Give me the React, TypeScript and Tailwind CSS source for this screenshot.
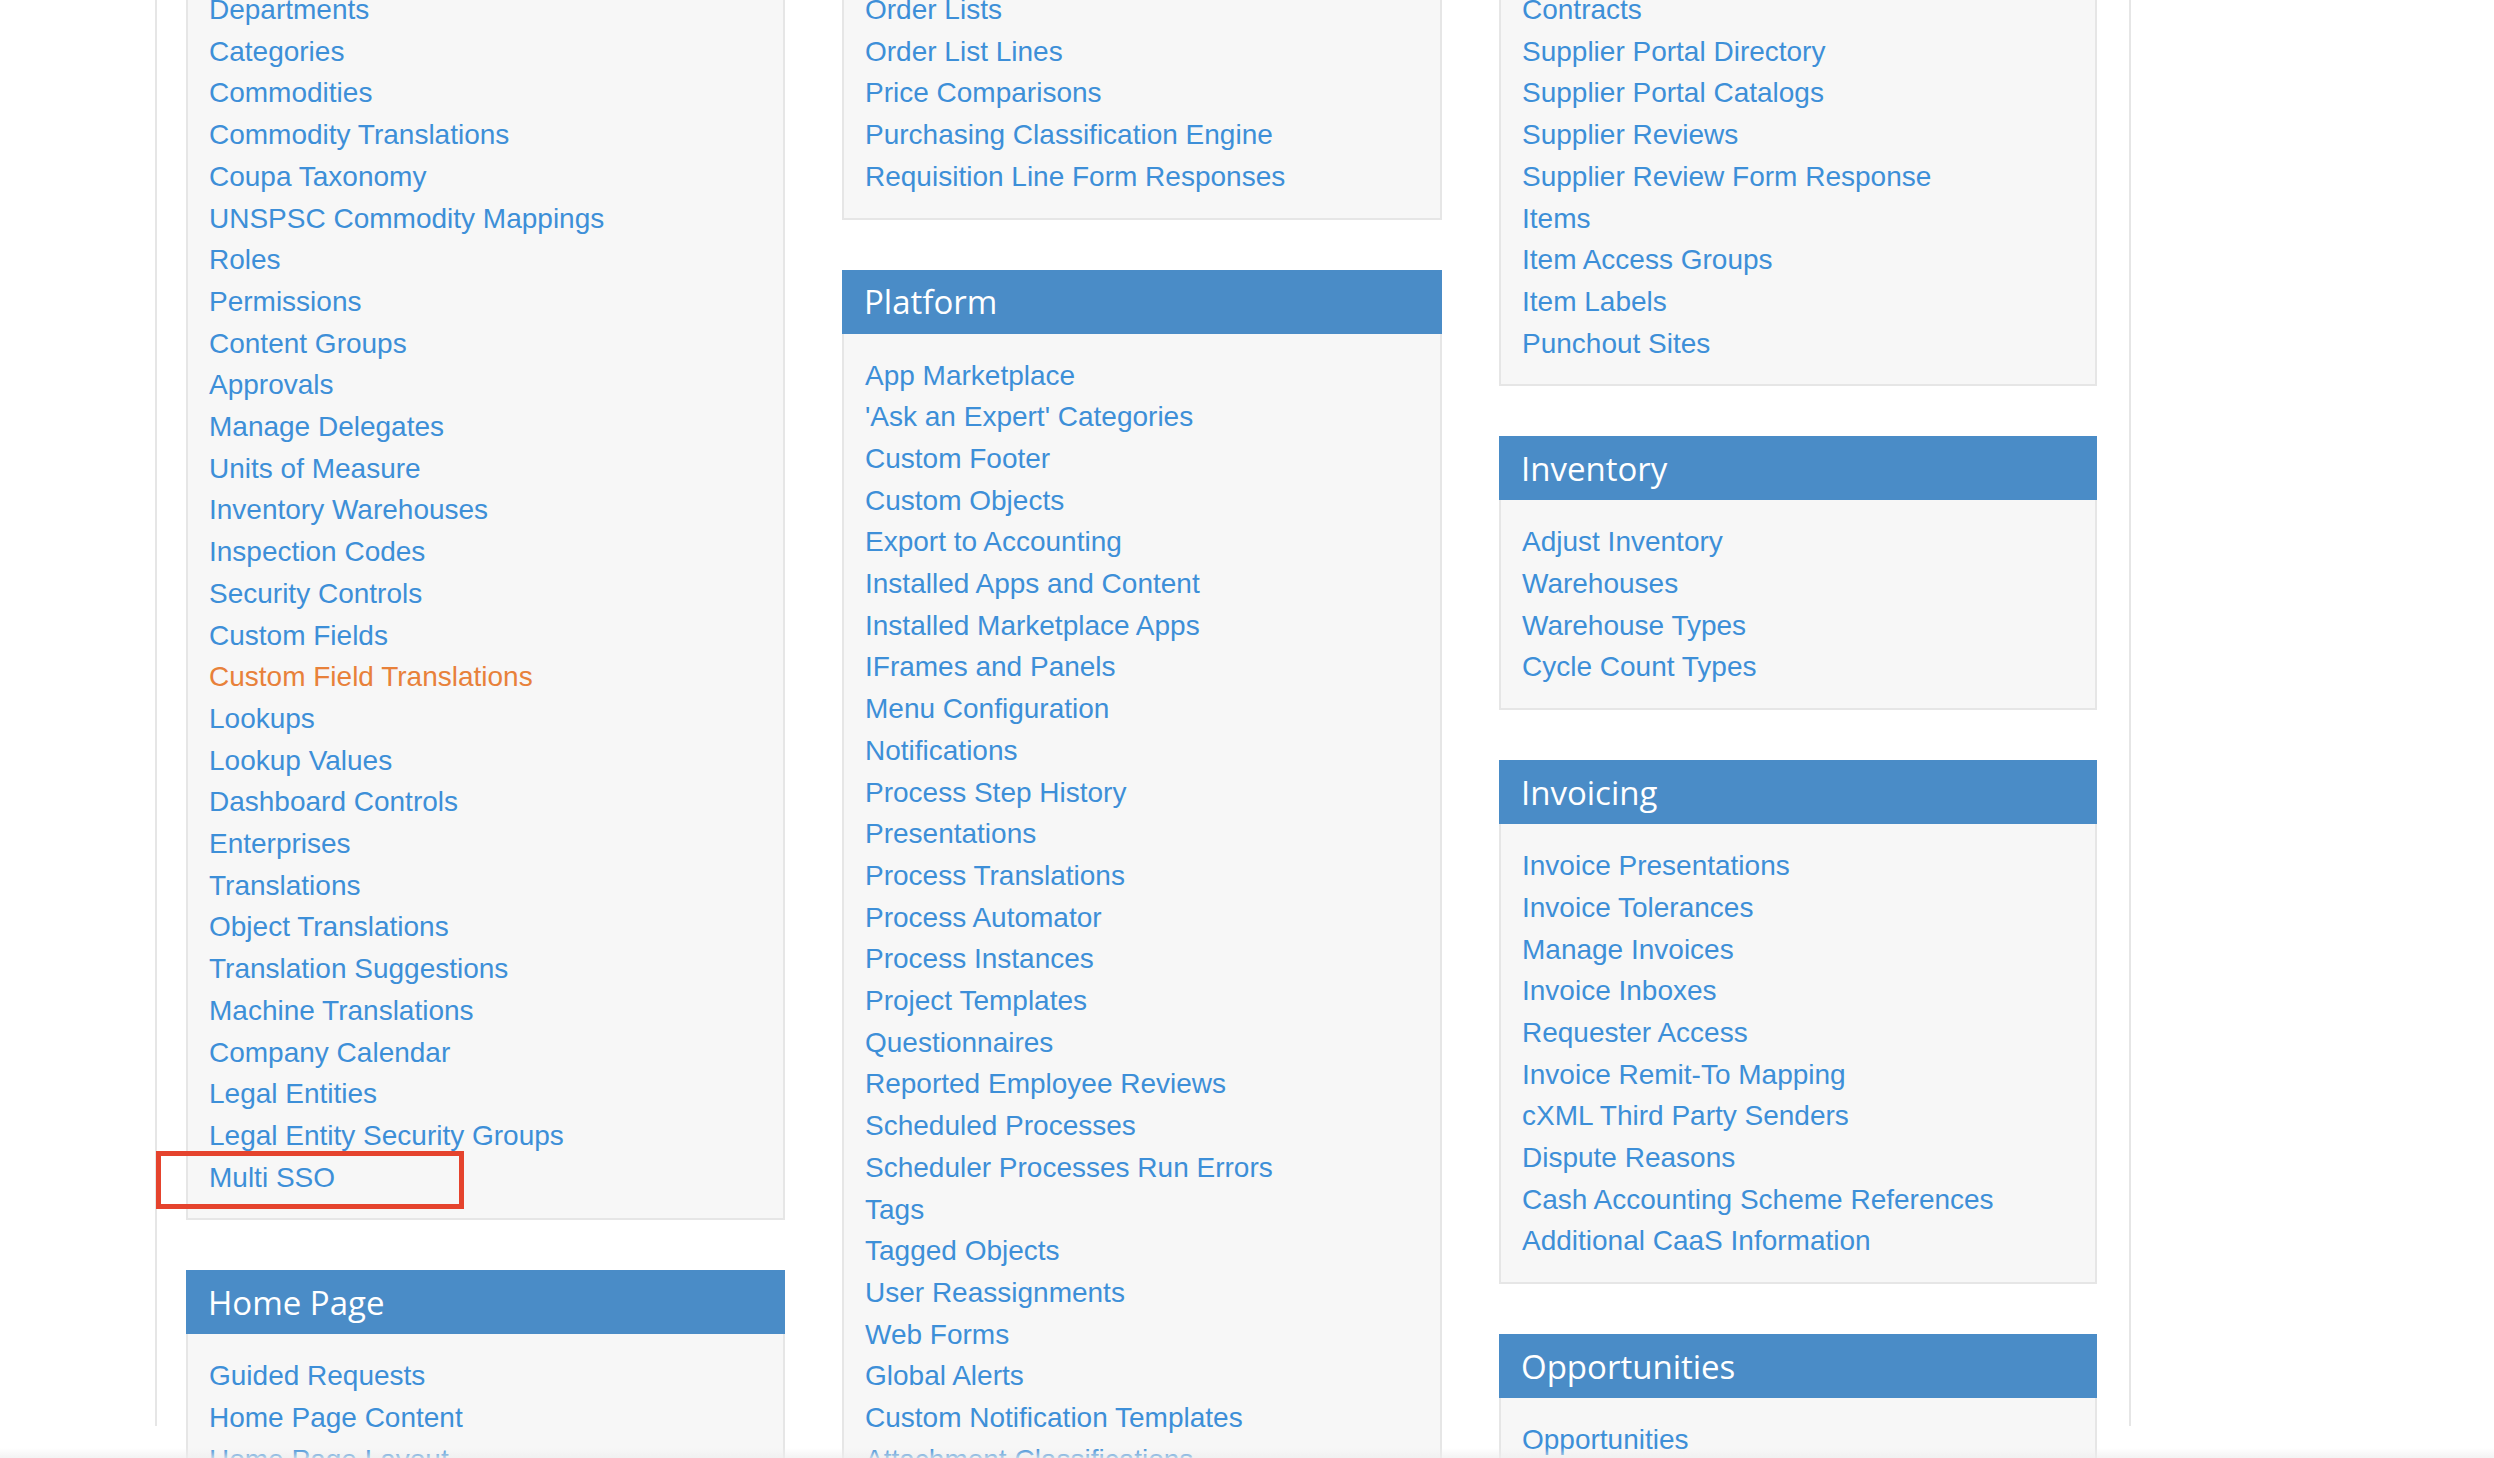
import React from 'react';

interface Section {
  title?: string;
  links: string[];
}

const FONT = { fontFamily: '"Liberation Sans", Arial, Helvetica, sans-serif' };

const columns: Section[][] = [
  [
    {
      links: [
        'Departments',
        'Categories',
        'Commodities',
        'Commodity Translations',
        'Coupa Taxonomy',
        'UNSPSC Commodity Mappings',
        'Roles',
        'Permissions',
        'Content Groups',
        'Approvals',
        'Manage Delegates',
        'Units of Measure',
        'Inventory Warehouses',
        'Inspection Codes',
        'Security Controls',
        'Custom Fields',
        'Custom Field Translations',
        'Lookups',
        'Lookup Values',
        'Dashboard Controls',
        'Enterprises',
        'Translations',
        'Object Translations',
        'Translation Suggestions',
        'Machine Translations',
        'Company Calendar',
        'Legal Entities',
        'Legal Entity Security Groups',
        'Multi SSO',
      ],
    },
    {
      title: 'Home Page',
      links: ['Guided Requests', 'Home Page Content', 'Home Page Layout'],
    },
  ],
  [
    {
      links: [
        'Order Lists',
        'Order List Lines',
        'Price Comparisons',
        'Purchasing Classification Engine',
        'Requisition Line Form Responses',
      ],
    },
    {
      title: 'Platform',
      links: [
        'App Marketplace',
        "'Ask an Expert' Categories",
        'Custom Footer',
        'Custom Objects',
        'Export to Accounting',
        'Installed Apps and Content',
        'Installed Marketplace Apps',
        'IFrames and Panels',
        'Menu Configuration',
        'Notifications',
        'Process Step History',
        'Presentations',
        'Process Translations',
        'Process Automator',
        'Process Instances',
        'Project Templates',
        'Questionnaires',
        'Reported Employee Reviews',
        'Scheduled Processes',
        'Scheduler Processes Run Errors',
        'Tags',
        'Tagged Objects',
        'User Reassignments',
        'Web Forms',
        'Global Alerts',
        'Custom Notification Templates',
        'Attachment Classifications',
      ],
    },
  ],
  [
    {
      links: [
        'Contracts',
        'Supplier Portal Directory',
        'Supplier Portal Catalogs',
        'Supplier Reviews',
        'Supplier Review Form Response',
        'Items',
        'Item Access Groups',
        'Item Labels',
        'Punchout Sites',
      ],
    },
    {
      title: 'Inventory',
      links: ['Adjust Inventory', 'Warehouses', 'Warehouse Types', 'Cycle Count Types'],
    },
    {
      title: 'Invoicing',
      links: [
        'Invoice Presentations',
        'Invoice Tolerances',
        'Manage Invoices',
        'Invoice Inboxes',
        'Requester Access',
        'Invoice Remit-To Mapping',
        'cXML Third Party Senders',
        'Dispute Reasons',
        'Cash Accounting Scheme References',
        'Additional CaaS Information',
      ],
    },
    {
      title: 'Opportunities',
      links: ['Opportunities', 'Opportunity Categories'],
    },
  ],
];

function Panel({ section }: { section: Section }) {
  return (
    <div className="mb-[50px]">
      {section.title && (
        <div className="h-[64px] bg-[#4a8cc7] flex items-center px-[22px]">
          <h2
            className="text-white text-[33px] leading-none"
            style={{ fontFamily: '"Open Sans", "Liberation Sans", sans-serif' }}
          >
            {section.title}
          </h2>
        </div>
      )}
      <ul className="bg-[#f7f7f7] border-2 border-t-0 border-[#e6e6e6] pt-[21px] pb-[20px] px-[21px]">
        {section.links.map((link) => (
          <li key={link} className="relative">
            <a
              href="#"
              className={`block text-[28px] leading-[41.7px] whitespace-nowrap ${
                link === 'Custom Field Translations' ? 'text-[#e8813a]' : 'text-[#3d8fd8]'
              }`}
              style={FONT}
            >
              {link}
            </a>
            {/* highlight annotation */}
            {link === 'Multi SSO' && (
              <span className="absolute -left-[53px] -top-[6px] w-[308px] h-[58px] border-[5px] border-[#e5432d] pointer-events-none" />
            )}
          </li>
        ))}
      </ul>
    </div>
  );
}

export default function App() {
  return (
    <div className="relative h-[1458px] overflow-hidden bg-white">
      <div className="ml-[155px] w-[1976px] h-full border-x-2 border-[#e6e6e6]">
        <div className="-mt-[32px] pl-[29px] grid grid-cols-[599px_600px_598px] gap-x-[57px] items-start">
          {columns.map((col, i) => (
            <div key={i}>
              {col.map((section, j) => (
                <Panel key={j} section={section} />
              ))}
            </div>
          ))}
        </div>
      </div>
      <div className="pointer-events-none absolute bottom-0 left-0 right-0 h-[10px] bg-linear-to-t from-[#eeeeee]/70 to-transparent" />
    </div>
  );
}
